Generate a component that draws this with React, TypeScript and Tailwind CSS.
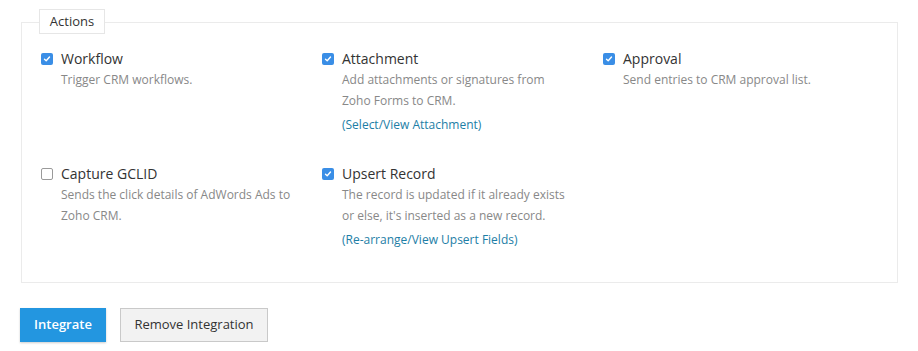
type Action = {
  title: string;
  desc: string[];
  checked: boolean;
  link?: string;
};

const actions: Action[] = [
  { title: "Workflow", desc: ["Trigger CRM workflows."], checked: true },
  {
    title: "Attachment",
    desc: ["Add attachments or signatures from", "Zoho Forms to CRM."],
    checked: true,
    link: "(Select/View Attachment)",
  },
  { title: "Approval", desc: ["Send entries to CRM approval list."], checked: true },
  {
    title: "Capture GCLID",
    desc: ["Sends the click details of AdWords Ads to", "Zoho CRM."],
    checked: false,
  },
  {
    title: "Upsert Record",
    desc: ["The record is updated if it already exists", "or else, it's inserted as a new record."],
    checked: true,
    link: "(Re-arrange/View Upsert Fields)",
  },
];

function Check({ checked }: { checked: boolean }) {
  if (!checked) {
    return <span className="mt-[4px] block h-[12px] w-[12px] shrink-0 rounded-[2px] border border-[#9a9a9a] bg-white" />;
  }
  return (
    <span className="mt-[4px] flex h-[12px] w-[12px] shrink-0 items-center justify-center rounded-[2px] bg-[#3a8ee6]">
      <svg width="8" height="8" viewBox="0 0 8 8" fill="none">
        <path d="M1.5 4.2 L3.2 5.8 L6.5 2" stroke="white" strokeWidth="1.4" strokeLinecap="round" strokeLinejoin="round" />
      </svg>
    </span>
  );
}

function ActionItem({ a }: { a: Action }) {
  return (
    <div className="flex gap-[8px]">
      <Check checked={a.checked} />
      <div>
        <div className="text-[14px] leading-[20px] text-[#333]">{a.title}</div>
        <div className="text-[12px] leading-[21px] text-[#888]">
          {a.desc.map((d) => (
            <div key={d}>{d}</div>
          ))}
        </div>
        {a.link && <div className="mt-[3px] text-[12px] leading-[21px] text-[#1d7ea6]">{a.link}</div>}
      </div>
    </div>
  );
}

export default function App() {
  return (
    <div className="h-[351px] w-[918px] bg-white px-[20px] pt-[9px]" style={{ fontFamily: '"Open Sans", sans-serif' }}>
      <div className="relative pt-[13px]">
        <div className="absolute left-[19px] top-0 z-10 flex h-[25px] w-[66px] items-center justify-center border border-[#e6e6e6] bg-white text-[13px] text-[#333]">
          Actions
        </div>
        <div className="ml-[1px] h-[261px] w-[877px] border border-[#ebebeb] px-[19px] pt-[26px]">
          <div className="grid grid-cols-[281px_281px_1fr] gap-y-[29px]">
            {actions.map((a) => (
              <ActionItem key={a.title} a={a} />
            ))}
          </div>
        </div>
      </div>
      <div className="mt-[25px] flex gap-[14px]">
        <button className="h-[34px] w-[86px] bg-[#2396e0] text-[13px] font-semibold text-white shadow-[0_1px_2px_rgba(0,0,0,0.2)]">
          Integrate
        </button>
        <button className="h-[34px] w-[148px] border border-[#c9c9c9] bg-[#f2f2f2] text-[13px] text-[#333]">
          Remove Integration
        </button>
      </div>
    </div>
  );
}
